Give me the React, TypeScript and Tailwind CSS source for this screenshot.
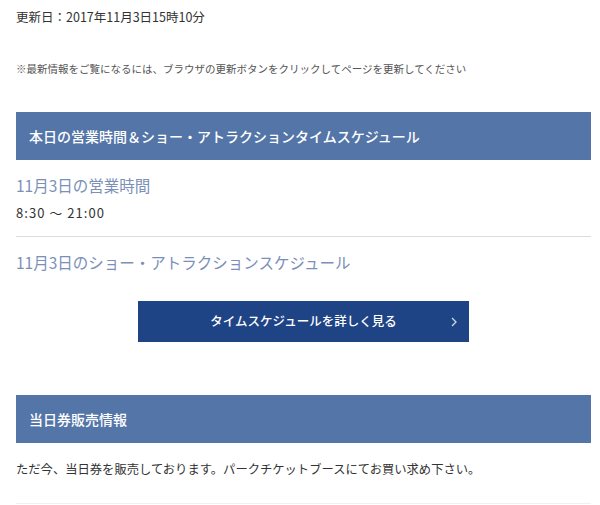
import React from 'react';

const font = { fontFamily: '"Noto Sans CJK JP", "Noto Sans", sans-serif' };

const SectionHeader: React.FC<{ title: string }> = ({ title }) => (
  <div className="h-[48px] bg-[#5475a8] flex items-center pl-[13px] text-white text-[14px] font-medium">
    {title}
  </div>
);

export default function App() {
  return (
    <div className="w-[600px] h-[505px] bg-white overflow-hidden" style={font}>
      <div className="ml-4 w-[575px] pt-[8px]">
        <p className="text-[12.5px] leading-[18px] text-[#333]">更新日：2017年11月3日15時10分</p>
        <p className="mt-[35px] text-[10.5px] leading-[16px] text-[#555]">
          ※最新情報をご覧になるには、ブラウザの更新ボタンをクリックしてページを更新してください
        </p>

        <div className="mt-[35px]">
          <SectionHeader title="本日の営業時間＆ショー・アトラクションタイムスケジュール" />
        </div>

        <h2 className="mt-[14px] text-[15.5px] leading-[22px] text-[#7b90b8]">11月3日の営業時間</h2>
        <p className="mt-[8px] text-[13px] leading-[18px] text-[#333] tracking-[0.08em]">8:30 〜 21:00</p>

        <div className="mt-[14px] border-t border-[#dcdcdc]" />

        <h2 className="mt-[14px] text-[15.5px] leading-[22px] text-[#7b90b8]">
          11月3日のショー・アトラクションスケジュール
        </h2>

        <div className="mt-[28px] flex justify-center">
          <div className="relative w-[331px] h-[41px] bg-[#1f4486] flex items-center justify-center text-white text-[12.5px] font-medium">
            タイムスケジュールを詳しく見る
            <span className="absolute right-[12px] top-1/2 -translate-y-1/2">
              <svg width="6" height="10" viewBox="0 0 6 10" fill="none">
                <path d="M1 1l4 4-4 4" stroke="#cfd8ea" strokeWidth="1.3" />
              </svg>
            </span>
          </div>
        </div>

        <div className="mt-[53px]">
          <SectionHeader title="当日券販売情報" />
        </div>

        <p className="mt-[17px] text-[12.3px] leading-[18px] text-[#333]">
          ただ今、当日券を販売しております。パークチケットブースにてお買い求め下さい。
        </p>

        <div className="mt-[25px] border-t border-[#f0f0f0]" />
      </div>
    </div>
  );
}
